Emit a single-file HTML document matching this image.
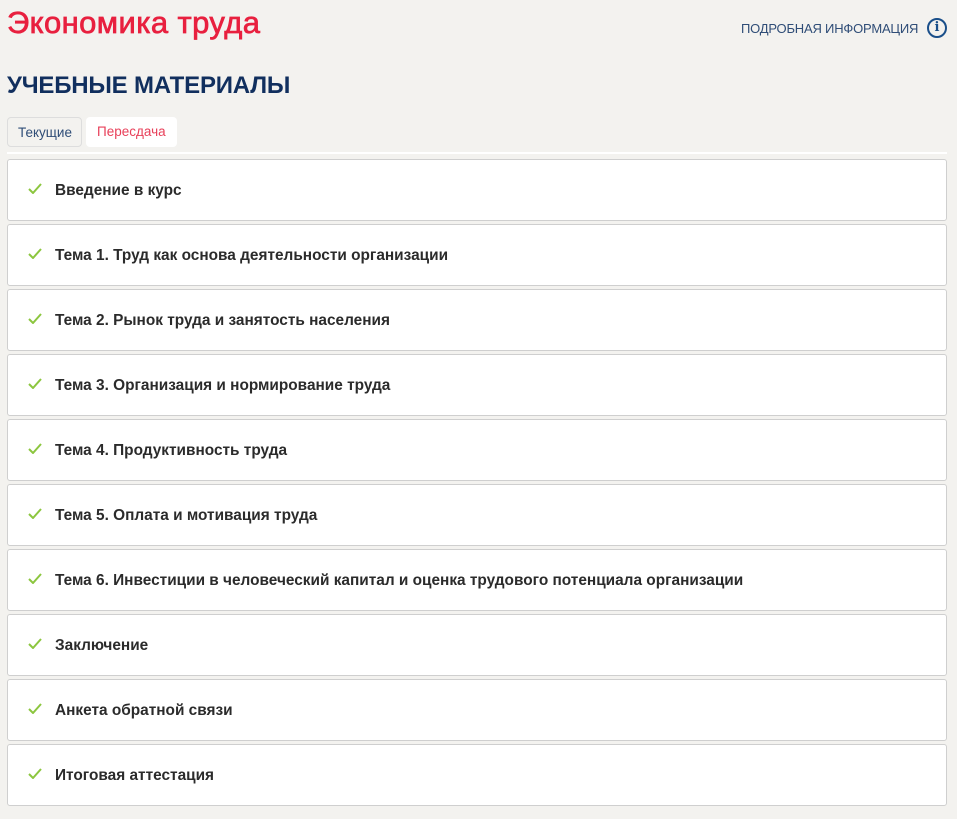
<!DOCTYPE html>
<html><head><meta charset="utf-8"><style>
body{margin:0;background:#f3f2ef;font-family:"Liberation Sans","DejaVu Sans",sans-serif;width:957px;height:819px;overflow:hidden;position:relative}
.t{position:absolute;left:7px;top:5px;font-size:31px;color:#e8203f;letter-spacing:0.4px;-webkit-text-stroke:0.7px #e8203f}
.info{position:absolute;left:741px;top:21px;font-size:13px;color:#2f4d77;letter-spacing:-0.2px}
.ic{position:absolute;left:927px;top:18px;width:16px;height:16px;border:2px solid #1a4f8a;border-radius:50%;color:#1a4f8a;font-size:13px;font-weight:bold;text-align:center;line-height:16px;font-family:"DejaVu Serif",serif}
.h{position:absolute;left:7px;top:72px;font-size:24px;font-weight:bold;color:#112f5e;letter-spacing:-0.2px}
.tab{position:absolute;top:117px;height:30px;line-height:30px;font-size:13.5px;border-radius:4px;padding:0 10px;box-sizing:border-box}
.t1{left:7px;width:75px;border:1px solid #ddd;color:#2f4d77}
.t2{left:86px;width:91px;background:#fff;color:#e8405a;padding-left:11px}
.line{position:absolute;left:7px;top:152px;width:940px;height:2px;background:#fff}
.c{position:absolute;left:7px;width:940px;height:62px;background:#fff;border:1px solid #cfcfcf;border-radius:3px;box-sizing:border-box}
.c span{position:absolute;left:47px;top:22px;font-size:15.4px;font-weight:bold;color:#2b2b2b}
.c svg{position:absolute;left:20px;top:23px}
</style></head><body>
<div class="t">Экономика труда</div>
<div class="info">ПОДРОБНАЯ ИНФОРМАЦИЯ</div>
<div class="ic">i</div>
<div class="h">УЧЕБНЫЕ МАТЕРИАЛЫ</div>
<div class="tab t1">Текущие</div>
<div class="tab t2">Пересдача</div>
<div class="line"></div>
<div class="c" style="top:159px"><svg width="14" height="11"><path d="M1 6l4 4 8-9" stroke="#8cc63f" stroke-width="2" fill="none"/></svg><span>Введение в курс</span></div>
<div class="c" style="top:224px"><svg width="14" height="11"><path d="M1 6l4 4 8-9" stroke="#8cc63f" stroke-width="2" fill="none"/></svg><span>Тема 1. Труд как основа деятельности организации</span></div>
<div class="c" style="top:289px"><svg width="14" height="11"><path d="M1 6l4 4 8-9" stroke="#8cc63f" stroke-width="2" fill="none"/></svg><span>Тема 2. Рынок труда и занятость населения</span></div>
<div class="c" style="top:354px"><svg width="14" height="11"><path d="M1 6l4 4 8-9" stroke="#8cc63f" stroke-width="2" fill="none"/></svg><span>Тема 3. Организация и нормирование труда</span></div>
<div class="c" style="top:419px"><svg width="14" height="11"><path d="M1 6l4 4 8-9" stroke="#8cc63f" stroke-width="2" fill="none"/></svg><span>Тема 4. Продуктивность труда</span></div>
<div class="c" style="top:484px"><svg width="14" height="11"><path d="M1 6l4 4 8-9" stroke="#8cc63f" stroke-width="2" fill="none"/></svg><span>Тема 5. Оплата и мотивация труда</span></div>
<div class="c" style="top:549px"><svg width="14" height="11"><path d="M1 6l4 4 8-9" stroke="#8cc63f" stroke-width="2" fill="none"/></svg><span>Тема 6. Инвестиции в человеческий капитал и оценка трудового потенциала организации</span></div>
<div class="c" style="top:614px"><svg width="14" height="11"><path d="M1 6l4 4 8-9" stroke="#8cc63f" stroke-width="2" fill="none"/></svg><span>Заключение</span></div>
<div class="c" style="top:679px"><svg width="14" height="11"><path d="M1 6l4 4 8-9" stroke="#8cc63f" stroke-width="2" fill="none"/></svg><span>Анкета обратной связи</span></div>
<div class="c" style="top:744px"><svg width="14" height="11"><path d="M1 6l4 4 8-9" stroke="#8cc63f" stroke-width="2" fill="none"/></svg><span>Итоговая аттестация</span></div>
</body></html>
